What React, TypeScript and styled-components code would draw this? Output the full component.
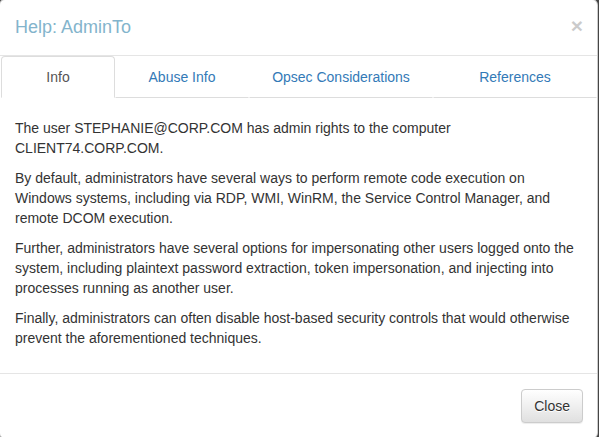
import React, { useState } from "react";
import styled, { createGlobalStyle } from "styled-components";

const GlobalStyle = createGlobalStyle`
	html, body {
		margin: 0;
		padding: 0;
		background: #454545;
		overflow: hidden;
	}
	body {
		font-family: "Liberation Sans", Arial, sans-serif;
		font-size: 14px;
		line-height: 20px;
		color: #333;
	}
	* {
		box-sizing: border-box;
	}
`;

const Modal = styled.div`
	margin: -1px 0 0 -1px;
	width: 599px;
	height: 440px;
	background: #fff;
	border: 1px solid rgba(0, 0, 0, 0.2);
	border-radius: 6px;
	display: flex;
	flex-direction: column;
	overflow: hidden;
`;

const Header = styled.div`
	display: flex;
	justify-content: space-between;
	align-items: flex-start;
	padding: 14px 14px 15px 15px;
	border-bottom: 1px solid #e5e5e5;
`;

const Title = styled.h4`
	margin: 0;
	font-size: 18px;
	font-weight: 400;
	line-height: 26px;
	color: #83b4cc;
`;

const CloseX = styled.button`
	margin-top: 1px;
	padding: 0;
	border: 0;
	background: transparent;
	font-family: "Liberation Sans", Arial, sans-serif;
	font-size: 21px;
	font-weight: 700;
	line-height: 1;
	color: #000;
	opacity: 0.2;
	cursor: pointer;
`;

const TabList = styled.ul`
	display: flex;
	margin: 0;
	padding: 0 0 0 1px;
	list-style: none;
`;

const Tab = styled.li<{ $active: boolean; $width?: number }>`
	flex: ${(p) => (p.$width ? `0 0 ${p.$width}px` : "1 1 auto")};
	padding: 10px 15px;
	text-align: center;
	line-height: 20px;
	border: 1px solid ${(p) => (p.$active ? "#ddd" : "transparent")};
	border-bottom: 1px solid ${(p) => (p.$active ? "transparent" : "#ddd")};
	border-radius: 4px 4px 0 0;
	color: ${(p) => (p.$active ? "#555" : "#337ab7")};
	background: #fff;
	cursor: pointer;
	white-space: nowrap;
`;

const Body = styled.div`
	padding: 20px 15px 15px 15px;
	border-bottom: 1px solid #e5e5e5;
`;

const Para = styled.p`
	margin: 0 0 10px 0;
`;

const Footer = styled.div`
	display: flex;
	justify-content: flex-end;
	padding: 15px 14px 15px 15px;
`;

const Button = styled.button`
	height: 34px;
	padding: 6px 12px;
	font-family: "Liberation Sans", Arial, sans-serif;
	font-size: 14px;
	line-height: 20px;
	color: #333;
	text-shadow: 0 1px 0 #fff;
	background-image: linear-gradient(to bottom, #fff 0, #e0e0e0 100%);
	border: 1px solid #ccc;
	border-radius: 4px;
	box-shadow: inset 0 1px 0 rgba(255, 255, 255, 0.15), 0 1px 1px rgba(0, 0, 0, 0.075);
	cursor: pointer;
`;

const tabs = [
	{ label: "Info", width: 114 },
	{ label: "Abuse Info", width: 134 },
	{ label: "Opsec Considerations", width: 184 },
	{ label: "References" },
];

const App: React.FC = () => {
	const [active, setActive] = useState("Info");

	return (
		<>
			<GlobalStyle />
			<Modal>
				{/* header */}
				<Header>
					<Title>Help: AdminTo</Title>
					<CloseX aria-label="Close">×</CloseX>
				</Header>

				{/* tabs */}
				<TabList>
					{tabs.map((t) => (
						<Tab key={t.label} $active={active === t.label} $width={t.width} onClick={() => setActive(t.label)}>
							{t.label}
						</Tab>
					))}
				</TabList>

				{/* content */}
				<Body>
					<Para>The user STEPHANIE@CORP.COM has admin rights to the computer CLIENT74.CORP.COM.</Para>
					<Para>
						By default, administrators have several ways to perform remote code execution on Windows systems, including via RDP, WMI, WinRM,
						the Service Control Manager, and remote DCOM execution.
					</Para>
					<Para>
						Further, administrators have several options for impersonating other users logged onto the system, including plaintext password
						extraction, token impersonation, and injecting into processes running as another user.
					</Para>
					<Para>
						Finally, administrators can often disable host-based security controls that would otherwise prevent the aforementioned
						techniques.
					</Para>
				</Body>

				{/* footer */}
				<Footer>
					<Button>Close</Button>
				</Footer>
			</Modal>
		</>
	);
};

export default App;
